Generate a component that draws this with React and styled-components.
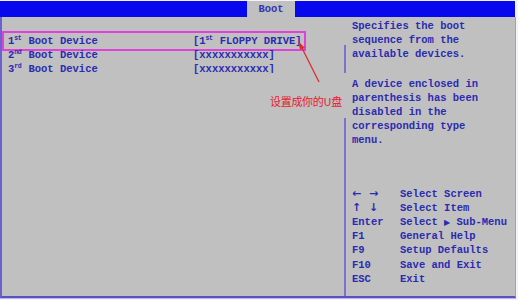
import React from "react";
import styled, { createGlobalStyle } from "styled-components";

const Global = createGlobalStyle`
  html, body { margin: 0; padding: 0; background: #f4f4f8; }
  body { font-family: "Liberation Mono", "DejaVu Sans Mono", monospace; }
`;

const Screen = styled.div`
  position: relative;
  width: 518px;
  height: 300px;
  display: flex;
  flex-direction: column;
  overflow: hidden;
  font-family: "Liberation Mono", "DejaVu Sans Mono", monospace;
  font-weight: bold;
  font-size: 10.5px;
  color: #2b2bb0;
`;

const TopBar = styled.div`
  margin-top: 1px;
  height: 16px;
  width: 515px;
  background: #0808ee;
  display: flex;
  padding-left: 247px;
  box-sizing: border-box;
`;

const Tab = styled.div`
  width: 48px;
  background: #c0c0c0;
  display: flex;
  align-items: flex-end;
  justify-content: center;
  padding-bottom: 1px;
  line-height: 14px;
  color: #3535b0;
  box-sizing: border-box;
`;

const Body = styled.div`
  display: flex;
  height: 281px;
  width: 516px;
  background: #c0c0c0;
  border-left: 2px solid #6a62cc;
  border-bottom: 2px solid #5a52c0;
  border-right: 1px solid #9c9ce0;
  box-sizing: border-box;
  box-shadow: 0 1px 0 #b8b8f4;
`;

const LeftPane = styled.div`
  width: 342px;
  padding-top: 17px;
  display: flex;
  flex-direction: column;
`;

const Row = styled.div`
  display: grid;
  grid-template-columns: 185px auto;
  height: 14px;
  line-height: 14px;
  margin-left: 3px;
  padding-left: 3px;
  width: 298px;
  box-sizing: border-box;
  outline: ${(p) => (p.$selected ? "2px solid #e040dc" : "none")};
  outline-offset: 1px;
  white-space: nowrap;
`;

const Sup = styled.sup`
  font-size: 6.5px;
  vertical-align: 4px;
  line-height: 0;
  letter-spacing: -0.5px;
  margin-right: 1px;
`;

const RightPane = styled.div`
  position: relative;
  flex: 1;
  padding: 2px 0 10px 8px;
  display: flex;
  flex-direction: column;
  line-height: 14px;
  white-space: pre;
  &::before {
    content: "";
    position: absolute;
    left: 0;
    top: 28px;
    bottom: 0;
    width: 2px;
    background: #7a74cc;
  }
`;

const HelpText = styled.div`
  display: flex;
  flex-direction: column;
`;

const Gap = styled.div`
  height: 16px;
`;

const Keys = styled.div`
  margin-top: auto;
  display: grid;
  grid-template-columns: 48px auto;
  grid-auto-rows: 14.2px;
  line-height: 14.2px;
`;

const Key = styled.span`
  font-family: ${(p) =>
    p.$glyph ? '"DejaVu Sans", sans-serif' : '"Liberation Mono", monospace'};
  font-weight: bold;
  font-size: ${(p) => (p.$glyph ? "11px" : "10.5px")};
  letter-spacing: ${(p) => (p.$glyph ? "2px" : "0")};
`;

const Tri = styled.span`
  font-family: "DejaVu Sans", sans-serif;
  font-size: 8px;
`;

const Note = styled.div`
  position: absolute;
  left: 270px;
  top: 73px;
  height: 45px;
  width: 77px;
  padding-top: 20px;
  box-sizing: border-box;
  background: #c0c0c0;
  color: #e8182c;
  font-family: "Noto Sans CJK SC", "Noto Sans", sans-serif;
  font-weight: normal;
  font-size: 11px;
  line-height: 16px;
  white-space: nowrap;
  letter-spacing: -0.3px;
`;

const Arrow = styled.svg`
  position: absolute;
  left: 290px;
  top: 38px;
`;

const helpLines1 = ["Specifies the boot", "sequence from the", "available devices."];
const helpLines2 = [
  "A device enclosed in",
  "parenthesis has been",
  "disabled in the",
  "corresponding type",
  "menu.",
];

const keys = [
  { k: "← →", d: "Select Screen", glyph: true },
  { k: "↑ ↓", d: "Select Item", glyph: true },
  { k: "Enter", d: "sub" },
  { k: "F1", d: "General Help" },
  { k: "F9", d: "Setup Defaults" },
  { k: "F10", d: "Save and Exit" },
  { k: "ESC", d: "Exit" },
];

export default function App() {
  return (
    <>
      <Global />
      <Screen>
        <TopBar>
          <Tab>Boot</Tab>
        </TopBar>
        <Body>
          <LeftPane>
            <Row $selected>
              <span>
                1<Sup>st</Sup> Boot Device
              </span>
              <span>
                [1<Sup>st</Sup> FLOPPY DRIVE]
              </span>
            </Row>
            <Row>
              <span>
                2<Sup>nd</Sup> Boot Device
              </span>
              <span>[xxxxxxxxxxx]</span>
            </Row>
            <Row>
              <span>
                3<Sup>rd</Sup> Boot Device
              </span>
              <span>[xxxxxxxxxxx]</span>
            </Row>
          </LeftPane>
          <RightPane>
            <HelpText>
              {helpLines1.map((l) => (
                <span key={l}>{l}</span>
              ))}
              <Gap />
              {helpLines2.map((l) => (
                <span key={l}>{l}</span>
              ))}
            </HelpText>
            <Keys>
              {keys.map((r) => (
                <React.Fragment key={r.k}>
                  <Key $glyph={r.glyph}>{r.k}</Key>
                  {r.d === "sub" ? (
                    <span>
                      Select <Tri>▶</Tri> Sub-Menu
                    </span>
                  ) : (
                    <span>{r.d}</span>
                  )}
                </React.Fragment>
              ))}
            </Keys>
          </RightPane>
        </Body>
        <Note>设置成你的U盘</Note>
        <Arrow width="40" height="50" viewBox="0 0 40 50">
          <line x1="29" y1="44" x2="11" y2="8" stroke="#e02a2a" strokeWidth="1.3" />
          <path d="M8 3 L15 10 L10 11.5 Z" fill="#e02a2a" />
        </Arrow>
      </Screen>
    </>
  );
}
